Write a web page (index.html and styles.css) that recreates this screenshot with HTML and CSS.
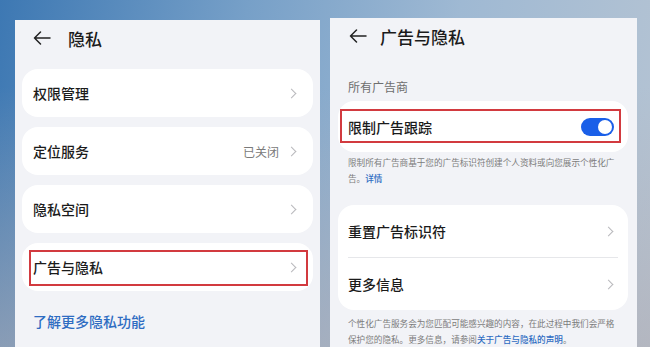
FILE: index.html
```html
<!DOCTYPE html>
<html lang="zh-CN">
<head>
<meta charset="utf-8">
<title>隐私</title>
<link rel="stylesheet" href="styles.css">
</head>
<body>
<div class="stage">
  <section class="panel panel-left">
    <header class="header">
      <svg class="back" viewBox="0 0 18 14" width="18" height="14"><path d="M17 7H1.5M7.5 1L1.5 7l6 6" fill="none" stroke="#222" stroke-width="1.5" stroke-linecap="round" stroke-linejoin="round"/></svg>
      <h1 class="title">隐私</h1>
    </header>
    <div class="list">
      <div class="card row"><span class="label">权限管理</span><span class="chev"></span></div>
      <div class="card row"><span class="label">定位服务</span><span class="value">已关闭</span><span class="chev"></span></div>
      <div class="card row"><span class="label">隐私空间</span><span class="chev"></span></div>
      <div class="card row marked"><span class="label">广告与隐私</span><span class="chev"></span></div>
    </div>
    <a class="more-link">了解更多隐私功能</a>
  </section>
  <section class="panel panel-right">
    <header class="header header-right">
      <svg class="back" viewBox="0 0 18 14" width="18" height="14"><path d="M17 7H1.5M7.5 1L1.5 7l6 6" fill="none" stroke="#222" stroke-width="1.5" stroke-linecap="round" stroke-linejoin="round"/></svg>
      <h1 class="title">广告与隐私</h1>
    </header>
    <div class="section-title">所有广告商</div>
    <div class="card row toggle-row marked-right"><span class="label">限制广告跟踪</span><span class="toggle"><span class="knob"></span></span></div>
    <div class="note note-top">
      <div class="line">限制所有广告商基于您的广告标识符创建个人资料或向您展示个性化广</div>
      <div class="line"><span>告。</span><span class="link">详情</span></div>
    </div>
    <div class="card group">
      <div class="grow"><span class="label">重置广告标识符</span><span class="chev"></span></div>
      <div class="divider"></div>
      <div class="grow"><span class="label">更多信息</span><span class="chev"></span></div>
    </div>
    <div class="note note-bottom">
      <div class="line">个性化广告服务会为您匹配可能感兴趣的内容，在此过程中我们会严格</div>
      <div class="line"><span>保护您的隐私。更多信息，请参阅</span><span class="link">关于广告与隐私的声明</span><span>。</span></div>
    </div>
  </section>
</div>
</body>
</html>
```
FILE: styles.css
```css
* { box-sizing: border-box; margin: 0; padding: 0; }
html, body { width: 650px; height: 347px; overflow: hidden; }
body {
  font-family: "Noto Sans CJK SC", "Noto Sans", sans-serif;
  color: #1b1b1b;
}
.stage {
  width: 650px;
  height: 347px;
  display: flex;
  gap: 10px;
  padding-left: 15px;
  background:
    linear-gradient(to bottom, rgba(170,170,178,0) 25%, rgba(178,174,180,0.6) 100%),
    linear-gradient(100deg, #3d78b3 0%, #77a0c8 35%, #9fb9d3 65%, #b6c4d3 100%);
}
.panel {
  background: #f2f3f7;
  display: flex;
  flex-direction: column;
}
.panel-left { width: 305px; margin-top: 20px; }
.panel-right { width: 307px; margin-top: 18px; }

.header {
  height: 36px;
  display: flex;
  align-items: center;
  padding-left: 18px;
  flex-shrink: 0;
}
.header-right { padding-left: 19px; }
.back { display: block; }
.title {
  font-size: 17px;
  font-weight: 500;
  margin-left: 17px;
}
.header-right .title { margin-left: 13px; }

.list {
  margin-top: 13px;
  display: flex;
  flex-direction: column;
  gap: 10px;
  padding: 0 7px;
}
.card {
  background: #fff;
  border-radius: 16px;
}
.row {
  height: 48px;
  display: flex;
  align-items: center;
  padding: 0 16px 0 11px;
  position: relative;
}
.label {
  font-size: 14px;
  font-weight: 500;
  flex: 1;
}
.value {
  font-size: 12px;
  color: #7a7a7a;
  margin-right: 9px;
}
.chev {
  width: 7px;
  height: 7px;
  border-top: 1.3px solid #b8b8bc;
  border-right: 1.3px solid #b8b8bc;
  transform: rotate(45deg);
  margin-right: 2px;
}
.marked::after {
  content: "";
  position: absolute;
  left: 7px;
  right: 5px;
  top: 7px;
  bottom: 5px;
  border: 2px solid #d23a3f;
}
.more-link {
  display: block;
  margin: 20px 0 0 18px;
  font-size: 14px;
  font-weight: 500;
  color: #2e6cc2;
}

.section-title {
  margin: 24px 0 0 18px;
  font-size: 12px;
  color: #6e6e6e;
  line-height: 18px;
}
.toggle-row {
  margin: 5px 9px 0 8px;
  height: 55px;
  padding: 0 14px 0 10px;
}
.marked-right::after {
  content: "";
  position: absolute;
  left: 2px;
  right: 7px;
  top: 8px;
  bottom: 9px;
  border: 2px solid #d23a3f;
}
.toggle {
  width: 33px;
  height: 18px;
  border-radius: 9px;
  background: #1a5fe8;
  position: relative;
}
.knob {
  position: absolute;
  right: 2px;
  top: 2px;
  width: 14px;
  height: 14px;
  border-radius: 50%;
  background: #fff;
}
.note {
  font-size: 8.6px;
  color: #7c7c7c;
  padding: 0 18px;
}
.line {
  height: 16px;
  line-height: 16px;
  white-space: nowrap;
}
.note-top { margin-top: 2px; }
.note .link { color: #2e6cc2; font-weight: 500; }
.group {
  margin: 19px 9px 0 8px;
  padding: 0 10px;
}
.grow {
  height: 52px;
  display: flex;
  align-items: center;
  padding-right: 4px;
}
.divider {
  height: 1px;
  background: #e6e7ea;
}
.note-bottom { margin-top: 5px; }
```
